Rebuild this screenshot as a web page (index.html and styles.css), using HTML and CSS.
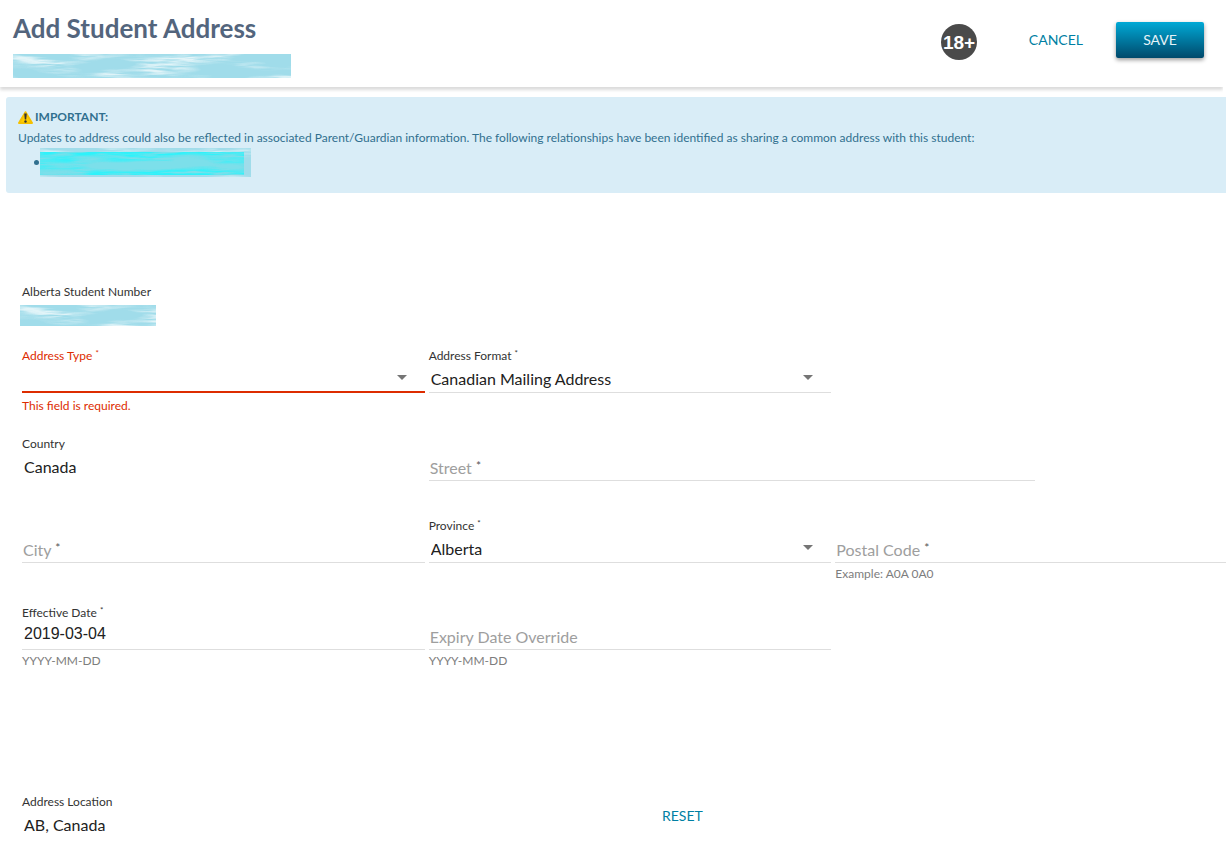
FILE: index.html
```html
<!DOCTYPE html>
<html lang="en">
<head>
<meta charset="utf-8">
<meta name="viewport" content="width=device-width, initial-scale=1">
<title>Add Student Address</title>
<link rel="stylesheet" href="styles.css">
</head>
<body>
<svg class="defs" aria-hidden="true">
  <defs>
    <filter id="brush" x="0" y="0" width="100%" height="100%" color-interpolation-filters="sRGB">
      <feTurbulence type="fractalNoise" baseFrequency="0.03 0.5" numOctaves="3" seed="7"/>
      <feColorMatrix type="matrix" values="0 0 0 0 1  0 0 0 0 1  0 0 0 0 1  3 0 0 0 -0.9" result="streaks"/>
      <feTurbulence type="fractalNoise" baseFrequency="0.016 0.09" numOctaves="2" seed="12"/>
      <feColorMatrix type="matrix" values="0 0 0 0 1  0 0 0 0 1  0 0 0 0 1  4 0 0 0 -1.8" result="patches"/>
      <feComposite in="streaks" in2="patches" operator="in"/>
    </filter>
    <filter id="brush-cyan" x="0" y="0" width="100%" height="100%" color-interpolation-filters="sRGB">
      <feTurbulence type="fractalNoise" baseFrequency="0.03 0.5" numOctaves="3" seed="3"/>
      <feColorMatrix type="matrix" values="0 0 0 0 0.18  0 0 0 0 0.95  0 0 0 0 0.98  3 0 0 0 -0.8" result="streaks"/>
      <feTurbulence type="fractalNoise" baseFrequency="0.016 0.09" numOctaves="2" seed="5"/>
      <feColorMatrix type="matrix" values="0 0 0 0 1  0 0 0 0 1  0 0 0 0 1  4 0 0 0 -1.5" result="patches"/>
      <feComposite in="streaks" in2="patches" operator="in"/>
    </filter>
  </defs>
</svg>

<header class="topbar">
  <div class="heading">
    <h1 class="title">Add Student Address</h1>
    <svg class="masked masked-name" aria-hidden="true"><rect width="100%" height="100%" fill="#a0dcea"/><rect width="100%" height="100%" filter="url(#brush)" opacity="0.7"/></svg>
  </div>
  <div class="actions">
    <svg class="age-badge" viewBox="0 0 36 36" role="img" aria-label="18+">
      <circle cx="18" cy="18" r="18"/>
      <text x="18" y="25" text-anchor="middle">18+</text>
    </svg>
    <button class="btn btn-flat" type="button">CANCEL</button>
    <button class="btn btn-raised" type="submit" form="address-form">SAVE</button>
  </div>
</header>

<section class="alert">
  <p class="alert-title">
    <svg class="warning" viewBox="0 0 15 13" aria-hidden="true">
      <path d="M7.5 1.2 14 12H1Z" fill="#fc0" stroke="#f5c000" stroke-width="2" stroke-linejoin="round"/>
      <path d="M6.2 2.5h2.6L8.2 8.5H6.8Z" fill="#333"/><circle cx="7.5" cy="10.5" r="1.2" fill="#333"/>
    </svg>
    <strong>IMPORTANT:</strong>
  </p>
  <p class="alert-text">Updates to address could also be reflected in associated Parent/Guardian information. The following relationships have been identified as sharing a common address with this student:</p>
  <ul class="relations">
    <li class="relation">
      <svg class="masked masked-relation" viewBox="0 0 211 29" aria-hidden="true"><rect width="211" height="29" fill="#a0dcea"/><rect width="211" height="29" filter="url(#brush)" opacity="0.5"/><rect y="4" width="204" height="23" fill="#7cdfea"/><rect y="4" width="204" height="23" filter="url(#brush-cyan)"/></svg>
    </li>
  </ul>
</section>

<form class="form" id="address-form" novalidate>
  <div class="row">
    <div class="field">
      <span class="label">Alberta Student Number</span>
      <svg class="masked masked-number" aria-hidden="true"><rect width="100%" height="100%" fill="#a0dcea"/><rect width="100%" height="100%" filter="url(#brush)" opacity="0.7"/></svg>
    </div>
  </div>

  <div class="row row-types">
    <div class="field invalid">
      <label class="label" for="type">Address Type <span class="req">*</span></label>
      <div class="select-wrap">
        <select class="control" id="type" required aria-describedby="type-error"><option value=""></option></select>
        <svg class="arrow" viewBox="0 0 10 5" aria-hidden="true"><path d="M0 0h10L5 5z"/></svg>
      </div>
      <span class="hint" id="type-error">This field is required.</span>
    </div>
    <div class="field">
      <label class="label" for="format">Address Format <span class="req">*</span></label>
      <div class="select-wrap">
        <select class="control" id="format"><option>Canadian Mailing Address</option></select>
        <svg class="arrow" viewBox="0 0 10 5" aria-hidden="true"><path d="M0 0h10L5 5z"/></svg>
      </div>
    </div>
  </div>

  <div class="row row-street">
    <div class="field">
      <span class="label">Country</span>
      <span class="value">Canada</span>
    </div>
    <div class="field field-wide empty">
      <label class="label" for="street">Street <span class="req">*</span></label>
      <input class="control" id="street" type="text" required>
    </div>
  </div>

  <div class="row row-city">
    <div class="field empty">
      <label class="label" for="city">City <span class="req">*</span></label>
      <input class="control" id="city" type="text" required>
    </div>
    <div class="field">
      <label class="label" for="province">Province <span class="req">*</span></label>
      <div class="select-wrap">
        <select class="control" id="province"><option>Alberta</option></select>
        <svg class="arrow" viewBox="0 0 10 5" aria-hidden="true"><path d="M0 0h10L5 5z"/></svg>
      </div>
    </div>
    <div class="field empty">
      <label class="label" for="postal">Postal Code <span class="req">*</span></label>
      <input class="control" id="postal" type="text" required aria-describedby="postal-hint">
      <span class="hint" id="postal-hint">Example: A0A 0A0</span>
    </div>
  </div>

  <div class="row row-dates">
    <div class="field">
      <label class="label" for="effective">Effective Date <span class="req">*</span></label>
      <input class="control control-date" id="effective" type="text" value="2019-03-04" aria-describedby="effective-hint">
      <span class="hint" id="effective-hint">YYYY-MM-DD</span>
    </div>
    <div class="field empty">
      <label class="label" for="expiry">Expiry Date Override</label>
      <input class="control" id="expiry" type="text" aria-describedby="expiry-hint">
      <span class="hint" id="expiry-hint">YYYY-MM-DD</span>
    </div>
  </div>

  <div class="location">
    <div class="field">
      <span class="label">Address Location</span>
      <span class="value">AB, Canada</span>
    </div>
    <button class="btn btn-flat" type="reset">RESET</button>
  </div>
</form>
</body>
</html>
```

FILE: styles.css
```css
* { box-sizing: border-box; }

body {
  margin: 0;
  overflow-x: hidden;
  background: #fff;
  color: #212121;
  font-family: Lato, "Open Sans", sans-serif;
  font-size: 16px;
}

.defs { position: absolute; width: 0; height: 0; }

.topbar {
  display: flex;
  justify-content: space-between;
  align-items: flex-start;
  margin-right: 3px;
  padding: 12px 19px 9px 13px;
  box-shadow: 0 3px 3px #dcdcdc;
  clip-path: inset(0 0 -6px 0);
}

.title {
  margin: 0 0 10px;
  color: #53657d;
  font-size: 26px;
  font-weight: 700;
  line-height: 32px;
}

.masked { display: block; }
.masked-name { width: 278px; height: 24px; }
.masked-number { width: 136px; height: 21px; margin: 4px 0 0 -2px; }
.masked-relation { width: 211px; height: 29px; }

.actions { display: flex; align-items: flex-start; padding-top: 10px; }

.age-badge { width: 36px; height: 36px; margin: 2px 35px 0 0; }
.age-badge circle { fill: #4a4a4a; }
.age-badge text {
  fill: #fff;
  font-family: "Liberation Sans Narrow", "Liberation Sans", sans-serif;
  font-size: 19px;
  font-weight: 700;
}

.btn {
  height: 36px;
  padding: 0 17px 2px;
  border: 0;
  border-radius: 2px;
  font-family: inherit;
  font-size: 14px;
  cursor: pointer;
}
.btn-flat { background: transparent; color: #007fa3; }
.btn-raised {
  min-width: 88px;
  margin-left: 16px;
  background: linear-gradient(#00a9d6, #00496b);
  color: #e6f3f8;
  box-shadow: 0 2px 4px rgba(0, 0, 0, 0.4);
}

.alert {
  margin: 10px 0 0 6px;
  padding: 12px 12px 16px;
  border-radius: 3px 0 0 3px;
  background: #d9edf7;
  color: #31708f;
  font-size: 12px;
  line-height: 16px;
}
.alert p { margin: 0; }
.alert-title { display: flex; align-items: center; gap: 2px; }
.warning { width: 15px; height: 13px; }
.alert .alert-text { margin-top: 5px; }
.relations { margin: 2px 0 0; padding: 0; list-style: none; }
.relation { display: flex; align-items: center; padding-left: 16px; }
.relation::before {
  width: 5px;
  height: 5px;
  margin-right: 1px;
  border-radius: 50%;
  background: #31708f;
  content: "";
}

.form { margin: 91px -12px 0 22px; }

.row {
  display: grid;
  grid-template-columns: repeat(6, minmax(0, 1fr));
  gap: 4px;
  align-items: start;
}
.row .field { grid-column: span 2; }
.row .field-wide { grid-column: span 3; }
.row-types { margin-top: 19px; }
.row-street { margin-top: 22px; }
.row-city { margin-top: 37px; }
.row-dates { margin-top: 23px; }

.field {
  display: grid;
  grid-template-rows: 17px 28px;
  grid-template-columns: minmax(0, 1fr);
}
.label { color: #333; font-size: 12px; line-height: 16px; }
.req { font-size: 8px; line-height: 1; vertical-align: 4px; }

.control {
  grid-row: 2;
  width: 100%;
  height: 28px;
  padding: 0 2px;
  border: 0;
  border-bottom: 1px solid #dedede;
  border-radius: 0;
  outline: 0;
  appearance: none;
  background: transparent;
  color: #212121;
  font-family: inherit;
  font-size: 16px;
}
.control-date {
  padding-bottom: 4px;
  font-family: "Liberation Sans", Arial, sans-serif;
}
.value { padding: 0 2px; line-height: 28px; }

.select-wrap { position: relative; }
.arrow {
  position: absolute;
  top: 10px;
  right: 18px;
  width: 10px;
  height: 5px;
  fill: #757575;
  pointer-events: none;
}

.empty .label {
  grid-area: 2 / 1;
  padding: 2px 1px 0;
  color: #9e9e9e;
  font-size: 16px;
  line-height: 26px;
}
.empty .control { grid-area: 2 / 1; }
.empty .req { color: #555; font-size: 12px; vertical-align: 4px; }

.hint {
  grid-row: 3;
  margin-top: 3px;
  color: #7d7d7d;
  font-size: 12px;
  line-height: 16px;
}

.invalid .label, .invalid .hint { color: #dd2c00; }
.invalid .control { border-bottom: 2px solid #dd2c00; }
.invalid .hint { margin-top: 5px; }

.location {
  display: flex;
  align-items: flex-start;
  gap: 16px;
  margin-top: 125px;
}
.location .field { width: 607px; }
.location .btn { margin-top: 4px; }
```
